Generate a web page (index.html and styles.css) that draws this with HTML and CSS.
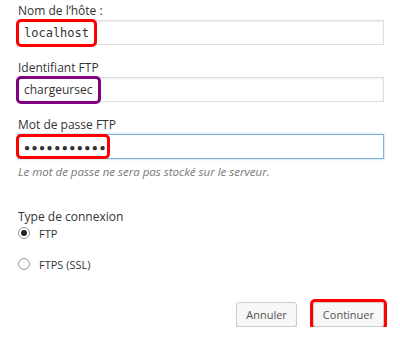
FILE: index.html
```html
<!DOCTYPE html>
<html lang="fr">
<head>
    <meta charset="UTF-8">
    <title>Connexion FTP</title>
    <link rel="stylesheet" href="styles.css">
</head>
<body>
    <form class="ftp-form">
        <div class="field">
            <label class="field-label">Nom de l’hôte :</label>
            <div class="input-wrap">
                <input class="text-input mono" type="text" value="localhost">
                <span class="mark mark-red mark-host"></span>
            </div>
        </div>
        <div class="field">
            <label class="field-label">Identifiant FTP</label>
            <div class="input-wrap">
                <input class="text-input" type="text" value="chargeursec">
                <span class="mark mark-purple mark-user"></span>
            </div>
        </div>
        <div class="field">
            <label class="field-label">Mot de passe FTP</label>
            <div class="input-wrap">
                <input class="text-input focused" type="text" value="●●●●●●●●●●●">
                <span class="mark mark-red mark-pass"></span>
            </div>
            <p class="hint">Le mot de passe ne sera pas stocké sur le serveur.</p>
        </div>

        <fieldset class="conn-type">
            <legend class="field-label">Type de connexion</legend>
            <label class="radio-row"><span class="radio checked"></span>FTP</label>
            <label class="radio-row"><span class="radio"></span>FTPS (SSL)</label>
        </fieldset>

        <div class="actions">
            <button type="button" class="btn">Annuler</button>
            <div class="btn-wrap">
                <button type="button" class="btn">Continuer</button>
                <span class="mark mark-red mark-btn"></span>
            </div>
        </div>
    </form>
</body>
</html>
```

FILE: styles.css
```css
body {
    margin: 0;
    background-color: #fff;
    font-family: 'Open Sans', sans-serif;
    color: #333;
}

.ftp-form {
    padding: 3px 16px 0 18px;
}

.field {
    margin-bottom: 15px;
}

.field-label {
    display: block;
    font-size: 12px;
    line-height: 16px;
    color: #333;
    margin-bottom: 1px;
}

.input-wrap {
    position: relative;
}

.text-input {
    display: block;
    box-sizing: border-box;
    width: 100%;
    height: 25px;
    padding: 0 5px;
    border: 1px solid #ddd;
    box-shadow: inset 0 1px 2px rgba(0, 0, 0, 0.07);
    font-family: 'Open Sans', sans-serif;
    font-size: 12px;
    color: #333;
    background: #fff;
}

.text-input.mono {
    font-family: 'DejaVu Sans Mono', monospace;
    font-size: 12px;
}

.text-input.focused {
    border-color: #7fb2e0;
    box-shadow: 0 0 2px rgba(30, 140, 190, 0.5);
    font-size: 10px;
    letter-spacing: 1.5px;
}

.mark {
    position: absolute;
    border: 3px solid #f00;
    border-radius: 5px;
    pointer-events: none;
}

.mark-purple {
    border-color: #800080;
}

.mark-host {
    left: -2px;
    top: -1px;
    width: 75px;
    height: 22px;
}

.mark-user {
    left: -2px;
    top: -1px;
    width: 79px;
    height: 22px;
}

.mark-pass {
    left: -2px;
    top: 0;
    width: 88px;
    height: 19px;
}

.hint {
    margin: 5px 0 0;
    font-size: 11.5px;
    font-style: italic;
    color: #777;
}

.conn-type {
    border: none;
    margin: 30px 0 0;
    padding: 0;
}

.conn-type legend {
    padding: 0;
    margin-bottom: 0;
}

.radio-row {
    display: flex;
    align-items: center;
    gap: 9px;
    font-size: 11px;
    height: 16px;
    margin-bottom: 15px;
}

.radio {
    box-sizing: border-box;
    width: 12px;
    height: 12px;
    border: 1px solid #999;
    border-radius: 50%;
    display: flex;
    align-items: center;
    justify-content: center;
}

.radio.checked::after {
    content: "";
    width: 6px;
    height: 6px;
    border-radius: 50%;
    background: #222;
}

.actions {
    display: flex;
    justify-content: flex-end;
    align-items: center;
    gap: 16px;
    margin-top: 15px;
}

.btn-wrap {
    position: relative;
}

.btn {
    display: block;
    height: 25px;
    padding: 0 9px;
    border: 1px solid #ccc;
    border-radius: 3px;
    background: #f7f7f7;
    box-shadow: 0 1px 0 #ccc;
    font-family: 'Open Sans', sans-serif;
    font-size: 11px;
    color: #555;
}

.mark-btn {
    left: -3px;
    top: -3px;
    right: -3px;
    bottom: -3px;
}
```
